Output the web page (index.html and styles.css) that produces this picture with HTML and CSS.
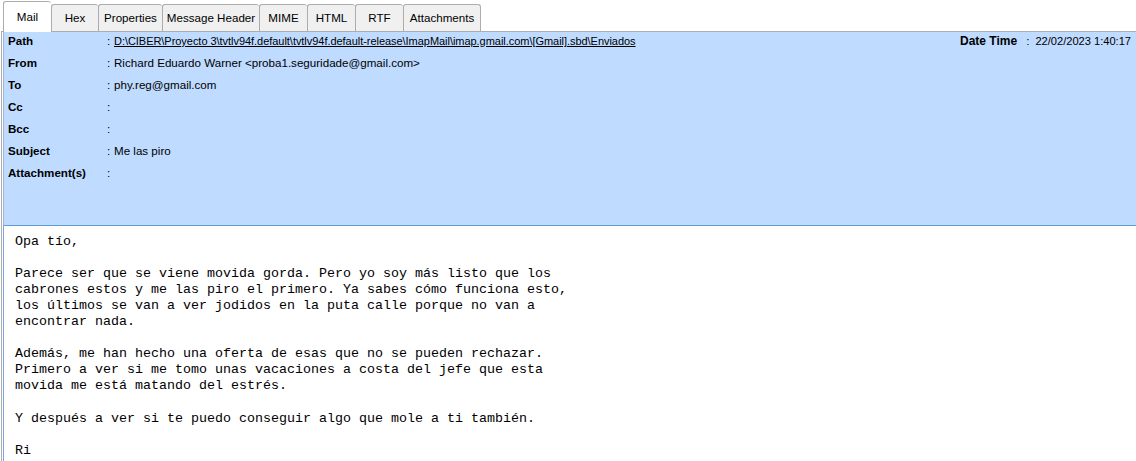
FILE: index.html
```html
<!DOCTYPE html>
<html>
<head>
<meta charset="utf-8">
<link rel="stylesheet" href="styles.css">
</head>
<body>
<div class="window">
  <div class="tabs">
    <div class="tab active">Mail</div>
    <div class="tab t-hex">Hex</div>
    <div class="tab t-props">Properties</div>
    <div class="tab t-mh">Message Header</div>
    <div class="tab">MIME</div>
    <div class="tab">HTML</div>
    <div class="tab">RTF</div>
    <div class="tab t-att">Attachments</div>
  </div>
  <div class="pane">
    <div class="header">
      <div class="row">
        <div class="field">
          <span class="label">Path</span><span class="colon">:</span><span class="value path">D:\CIBER\Proyecto 3\tvtlv94f.default\tvtlv94f.default-release\ImapMail\imap.gmail.com\[Gmail].sbd\Enviados</span>
        </div>
        <div class="date">
          <span class="dlabel">Date Time</span><span class="dcolon">:</span><span class="dvalue">22/02/2023 1:40:17</span>
        </div>
      </div>
      <div class="row"><span class="label">From</span><span class="colon">:</span><span class="value">Richard Eduardo Warner &lt;proba1.seguridade@gmail.com&gt;</span></div>
      <div class="row"><span class="label">To</span><span class="colon">:</span><span class="value">phy.reg@gmail.com</span></div>
      <div class="row"><span class="label">Cc</span><span class="colon">:</span><span class="value"></span></div>
      <div class="row"><span class="label">Bcc</span><span class="colon">:</span><span class="value"></span></div>
      <div class="row"><span class="label">Subject</span><span class="colon">:</span><span class="value">Me las piro</span></div>
      <div class="row"><span class="label">Attachment(s)</span><span class="colon">:</span><span class="value"></span></div>
    </div>
    <div class="body"><pre class="message">Opa tío,

Parece ser que se viene movida gorda. Pero yo soy más listo que los
cabrones estos y me las piro el primero. Ya sabes cómo funciona esto,
los últimos se van a ver jodidos en la puta calle porque no van a
encontrar nada.

Además, me han hecho una oferta de esas que no se pueden rechazar.
Primero a ver si me tomo unas vacaciones a costa del jefe que esta
movida me está matando del estrés.

Y después a ver si te puedo conseguir algo que mole a ti también.

Ri</pre></div>
  </div>
</div>
</body>
</html>
```

FILE: styles.css
```css
html, body {
  margin: 0;
  padding: 0;
  background: #ffffff;
  width: 1136px;
  height: 461px;
  overflow: hidden;
}

.window {
  height: 461px;
  display: flex;
  flex-direction: column;
  font-family: "Liberation Sans", Arial, sans-serif;
  font-size: 11.6px;
  color: #000;
}

.tabs {
  display: flex;
  align-items: flex-end;
  height: 31px;
  padding-left: 3px;
  position: relative;
  z-index: 1;
}

.tab {
  box-sizing: border-box;
  width: 48px;
  height: 27px;
  padding: 0 0 1px;
  border: 1px solid #adadad;
  border-right: none;
  border-bottom: none;
  border-radius: 3px 3px 0 0;
  background: #f0f0f0;
  display: flex;
  align-items: center;
  justify-content: center;
  font-size: 11.6px;
  color: #000;
  white-space: nowrap;
}

.tab.t-hex { width: 47px; }
.tab.t-props { width: 64px; }
.tab.t-mh { width: 97px; }
.tab.t-att {
  width: 78px;
  border-right: 1px solid #adadad;
}

.tab.active {
  height: 31px;
  margin-bottom: -1px;
  background: #ffffff;
  padding-bottom: 2px;
}

.pane {
  flex: 1;
  margin-left: 1px;
  border-left: 1px solid #adadad;
  border-top: 1px solid #adadad;
  padding-left: 1px;
  display: flex;
  flex-direction: column;
  min-height: 0;
}

.header {
  height: 194px;
  flex: none;
  box-sizing: border-box;
  background: #bfdbff;
  border-left: 1px solid #9fb7d4;
  border-bottom: 1px solid #5f9bd8;
  padding: 0 5px 0 4px;
}

.row {
  display: flex;
  align-items: flex-start;
  box-sizing: border-box;
  height: 22px;
  padding-top: 2px;
  line-height: 14px;
  white-space: nowrap;
}

.row:first-child {
  justify-content: space-between;
}

.field {
  display: flex;
  align-items: flex-start;
}

.label {
  width: 99px;
  font-weight: bold;
}

.colon {
  width: 7px;
}

.value.path {
  font-size: 11px;
  letter-spacing: -0.04px;
  text-decoration: underline;
}

.date {
  display: flex;
  align-items: flex-start;
}

.dlabel {
  font-weight: bold;
  font-size: 12px;
}

.dcolon {
  padding: 0 6px 0 9px;
}

.dvalue {
  font-size: 11.1px;
}

.body {
  flex: 1;
  min-height: 0;
  border-left: 1px solid #7aa8da;
  padding: 8px 0 0 11px;
  overflow: hidden;
}

.message {
  margin: 0;
  font-family: "Liberation Mono", "Courier New", monospace;
  font-size: 13.33px;
  line-height: 16.05px;
  color: #000;
}
```
